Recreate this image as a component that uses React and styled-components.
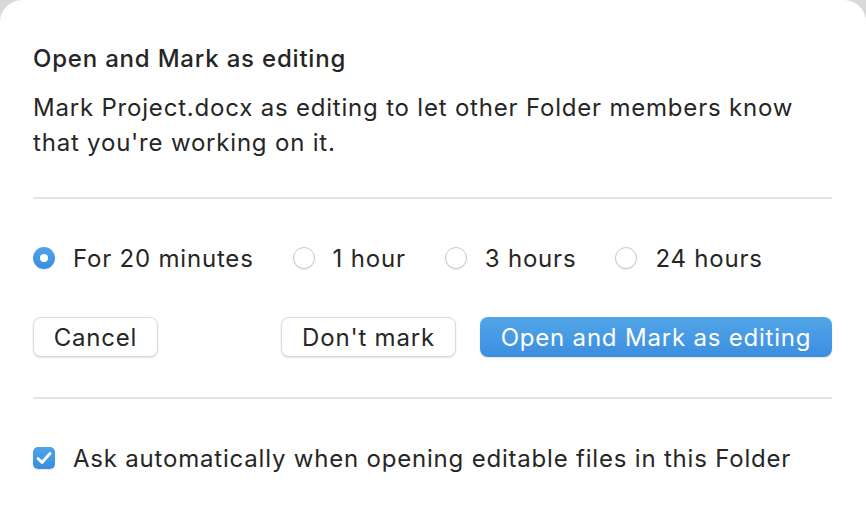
import React, { useState } from "react";
import styled, { createGlobalStyle } from "styled-components";

const GlobalStyle = createGlobalStyle`
	html, body {
		margin: 0;
		padding: 0;
		background: #d9d9d9;
	}
	body {
		font-family: Inter, "Noto Sans", sans-serif;
		letter-spacing: 0.8px;
		-webkit-font-smoothing: antialiased;
	}
`;

const Dialog = styled.div`
	width: 866px;
	height: 510px;
	box-sizing: border-box;
	background: #ffffff;
	border-radius: 22px 22px 0 0;
	padding: 44px 34px 0 33px;
	color: #262626;
	display: flex;
	flex-direction: column;
`;

const Title = styled.h1`
	margin: 0;
	font-size: 24px;
	line-height: 30px;
	font-weight: 500;
	letter-spacing: 0.8px;
`;

const Description = styled.p`
	margin: 16px 0 0;
	font-size: 24px;
	line-height: 35px;
	font-weight: 400;
`;

const Divider = styled.hr`
	border: none;
	height: 2px;
	background: #e4e4e4;
	margin: ${(props) => props.$top}px 0 0;
`;

const RadioRow = styled.div`
	display: flex;
	align-items: center;
	height: 40px;
	margin-top: 39px;
	gap: 39px;
`;

const Option = styled.label`
	display: flex;
	align-items: center;
	gap: 18px;
	font-size: 24px;
	cursor: pointer;
`;

const RadioDot = styled.span`
	width: 22px;
	height: 22px;
	box-sizing: border-box;
	border-radius: 50%;
	display: flex;
	align-items: center;
	justify-content: center;
	background: ${(props) =>
		props.$checked ? "linear-gradient(#4fa4e8, #3a8ddf)" : "#ffffff"};
	border: ${(props) => (props.$checked ? "none" : "1px solid #c9c9c9")};
	box-shadow: ${(props) =>
		props.$checked ? "0 1px 1px rgba(0,0,0,0.1)" : "0 1px 1px rgba(0,0,0,0.08)"};

	&::after {
		content: "";
		display: ${(props) => (props.$checked ? "block" : "none")};
		width: 8px;
		height: 8px;
		border-radius: 50%;
		background: #ffffff;
	}
`;

const ButtonRow = styled.div`
	display: flex;
	align-items: center;
	margin-top: 39px;
`;

const Button = styled.button`
	height: 40px;
	box-sizing: border-box;
	padding: 0;
	width: ${(props) => props.$width}px;
	font-family: inherit;
	letter-spacing: inherit;
	font-size: 24px;
	border-radius: 8px;
	color: ${(props) => (props.$primary ? "#ffffff" : "#262626")};
	background: ${(props) =>
		props.$primary ? "linear-gradient(#52a6e8, #3c8edf)" : "#ffffff"};
	border: ${(props) => (props.$primary ? "none" : "1px solid #dadada")};
	box-shadow: 0 1px 2px rgba(0, 0, 0, 0.12);
	cursor: pointer;
`;

const Spacer = styled.div`
	flex: 1;
`;

const CheckRow = styled.label`
	display: flex;
	align-items: center;
	gap: 18px;
	height: 40px;
	margin-top: 39px;
	font-size: 24px;
	cursor: pointer;
`;

const CheckBox = styled.span`
	width: 22px;
	height: 22px;
	border-radius: 5px;
	background: linear-gradient(#4fa4e8, #3a8ddf);
	display: flex;
	align-items: center;
	justify-content: center;
	box-shadow: 0 1px 1px rgba(0, 0, 0, 0.1);
`;

const durations = ["For 20 minutes", "1 hour", "3 hours", "24 hours"];

export default function App() {
	const [selected, setSelected] = useState(0);

	return (
		<>
			<GlobalStyle />
			<Dialog>
				<Title>Open and Mark as editing</Title>
				<Description>
					Mark Project.docx as editing to let other Folder members know
					<br />
					that you're working on it.
				</Description>
				<Divider $top={37} />
				<RadioRow>
					{durations.map((label, i) => (
						<Option key={label} onClick={() => setSelected(i)}>
							<RadioDot $checked={selected === i} />
							{label}
						</Option>
					))}
				</RadioRow>
				<ButtonRow>
					<Button $width={125}>Cancel</Button>
					<Spacer />
					<Button $width={175}>Don't mark</Button>
					<Button $primary $width={352} style={{ marginLeft: 24 }}>
						Open and Mark as editing
					</Button>
				</ButtonRow>
				<Divider $top={40} />
				<CheckRow>
					<CheckBox>
						<svg width="16" height="14" viewBox="0 0 16 14">
							<path
								d="M2 7.5 L6 11.5 L14 2.5"
								fill="none"
								stroke="#ffffff"
								strokeWidth="2.8"
								strokeLinecap="round"
								strokeLinejoin="round"
							/>
						</svg>
					</CheckBox>
					Ask automatically when opening editable files in this Folder
				</CheckRow>
			</Dialog>
		</>
	);
}
